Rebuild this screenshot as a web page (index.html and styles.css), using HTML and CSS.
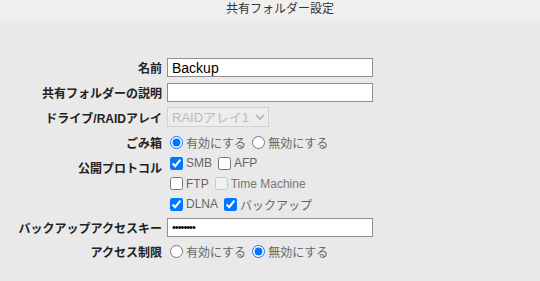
FILE: index.html
```html
<!DOCTYPE html>
<html lang="ja">
<head>
    <meta charset="UTF-8">
    <meta name="viewport" content="width=device-width, initial-scale=1.0">
    <title>共有フォルダー設定</title>
    <link rel="stylesheet" href="styles.css">
</head>
<body>
<div class="dialog-title">共有フォルダー設定</div>

<form class="share-form">
    <label class="field-label row-input" for="name">名前</label>
    <div class="field row-input"><input id="name" class="text-input" type="text" value="Backup"></div>

    <label class="field-label row-input2" for="desc">共有フォルダーの説明</label>
    <div class="field row-input2"><input id="desc" class="text-input" type="text" value=""></div>

    <label class="field-label row-select" for="drive">ドライブ/RAIDアレイ</label>
    <div class="field row-select">
        <select id="drive" class="drive-select" disabled>
            <option>RAIDアレイ1</option>
        </select>
    </div>

    <div class="field-label row-opt">ごみ箱</div>
    <div class="field row-opt">
        <label class="opt"><input type="radio" name="trash" checked>有効にする</label>
        <label class="opt"><input type="radio" name="trash">無効にする</label>
    </div>

    <div class="field-label row-opt">公開プロトコル</div>
    <div class="field protocols">
        <div class="opt-line">
            <label class="opt"><input type="checkbox" checked>SMB</label>
            <label class="opt"><input type="checkbox">AFP</label>
        </div>
        <div class="opt-line">
            <label class="opt"><input type="checkbox">FTP</label>
            <label class="opt disabled"><input type="checkbox" disabled>Time Machine</label>
        </div>
        <div class="opt-line">
            <label class="opt"><input type="checkbox" checked>DLNA</label>
            <label class="opt"><input type="checkbox" checked>バックアップ</label>
        </div>
    </div>

    <label class="field-label row-key" for="key">バックアップアクセスキー</label>
    <div class="field row-key"><input id="key" class="text-input key-input" type="password" value="12345678"></div>

    <div class="field-label row-opt">アクセス制限</div>
    <div class="field row-opt">
        <label class="opt"><input type="radio" name="access">有効にする</label>
        <label class="opt"><input type="radio" name="access" checked>無効にする</label>
    </div>
</form>
</body>
</html>
```

FILE: styles.css
```css
* {
    margin: 0;
    padding: 0;
    box-sizing: border-box;
}

body {
    background-color: #e9e9e9;
    font-family: "Liberation Sans", "Noto Sans CJK JP", sans-serif;
    color: #333;
}

/* Dialog header */
.dialog-title {
    height: 24px;
    padding: 1px 0 0 20px;
    text-align: center;
    font-size: 12px;
    line-height: 16px;
    color: #333;
    background: linear-gradient(#f0f0f0 0, #efefef 17px, #e9e9e9 24px);
}

.share-form {
    display: grid;
    grid-template-columns: 162px 1fr;
    column-gap: 5px;
    padding-top: 34px;
}

.field-label {
    text-align: right;
    font-size: 12px;
    font-weight: bold;
    color: #222;
    display: flex;
    align-items: center;
    justify-content: flex-end;
    height: 20px;
}

.field {
    display: flex;
    align-items: center;
    height: 20px;
}

.row-input { height: 19px; }
.row-input2 { height: 19px; margin-top: 6px; }
.row-select { height: 20px; margin-top: 5px; }
.row-opt { margin-top: 5px; }
.row-key { height: 19px; margin-top: 3px; }

.text-input {
    width: 206px;
    height: 19px;
    border: 1px solid #8f8f8f;
    background: #fff;
    padding: 0 4px;
    font-family: "Liberation Sans", "Noto Sans CJK JP", sans-serif;
    font-size: 14px;
    color: #000;
    outline: none;
}

.key-input {
    font-size: 11px;
    letter-spacing: -1px;
}

.drive-select {
    width: 102px;
    height: 20px;
    border: 1px solid #c8c8c8;
    background: #efefef;
    color: #a8a8a8;
    font-family: "Liberation Sans", "Noto Sans CJK JP", sans-serif;
    font-size: 13px;
    padding: 0;
}

.protocols {
    display: flex;
    flex-direction: column;
    align-items: flex-start;
    height: auto;
    margin-top: 1px;
}

.opt-line {
    display: flex;
    align-items: center;
    height: 20.5px;
}

.opt {
    display: inline-flex;
    align-items: center;
    font-size: 12px;
    color: #666;
    margin-right: 3px;
    font-family: "Liberation Sans", "Noto Sans CJK JP", sans-serif;
}

.opt input {
    width: 13px;
    height: 13px;
    margin: 0 3px 0 3px;
    accent-color: #0075ff;
}

.opt.disabled {
    color: #777;
}
```
